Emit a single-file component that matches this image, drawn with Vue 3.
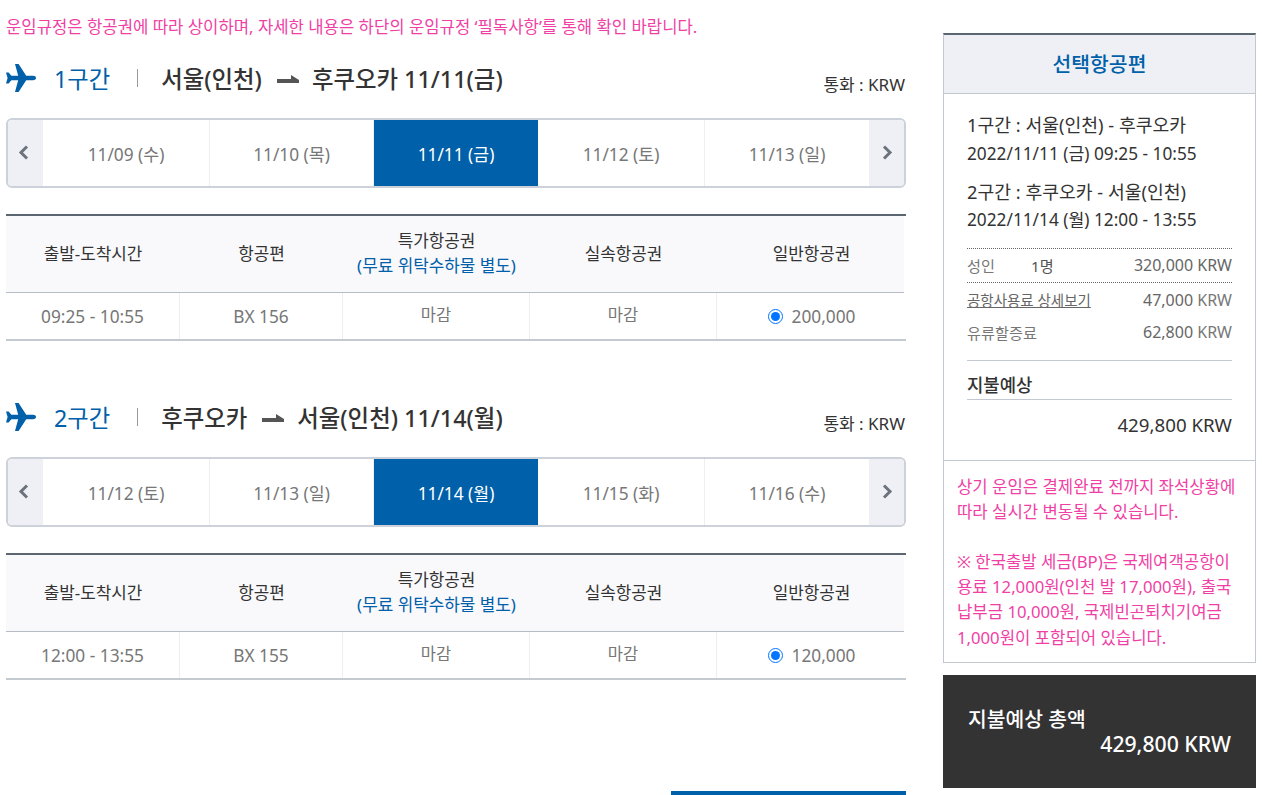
<script setup>
const sections = [
  {
    label: '1구간', from: '서울(인천)', to: '후쿠오카', date: '11/11(금)',
    tabs: ['11/09 (수)', '11/10 (목)', '11/11 (금)', '11/12 (토)', '11/13 (일)'],
    time: '09:25 - 10:55', flight: 'BX 156', price: '200,000',
  },
  {
    label: '2구간', from: '후쿠오카', to: '서울(인천)', date: '11/14(월)',
    tabs: ['11/12 (토)', '11/13 (일)', '11/14 (월)', '11/15 (화)', '11/16 (수)'],
    time: '12:00 - 13:55', flight: 'BX 155', price: '120,000',
  },
]
</script>

<template>
  <div class="page">
    <main class="main">
      <p class="notice">운임규정은 항공권에 따라 상이하며, 자세한 내용은 하단의 운임규정 ‘필독사항’를 통해 확인 바랍니다.</p>
      <section v-for="s in sections" :key="s.label" class="section">
        <div class="head">
          <svg class="plane" viewBox="0 0 30 28" aria-hidden="true">
            <path d="M9 0h3.6L20.2 11.8H27c1.8 0 3 .9 3 2.2s-1.2 2.2-3 2.2h-6.8L12.6 28H9l3.2-11.8H5.4L2.6 19.4H0L1.6 14 0 8.6h2.6l2.8 3.2h6.8z" />
          </svg>
          <h2 class="seg">{{ s.label }}</h2>
          <span class="bar"></span>
          <span class="route">{{ s.from }}</span>
          <svg class="arrow" viewBox="0 0 22 9" aria-hidden="true"><path d="M0 4h14V0l8 5v3H0z" /></svg>
          <span class="route">{{ s.to }} {{ s.date }}</span>
          <span class="currency">통화 : KRW</span>
        </div>

        <div class="tabs">
          <button class="nav prev" type="button"><svg viewBox="0 0 11 15"><path d="M9 1.5 3 7.5 9 13.5" /></svg></button>
          <div v-for="(t, i) in s.tabs" :key="t" class="tab" :class="{ active: i === 2 }">{{ t }}</div>
          <button class="nav next" type="button"><svg viewBox="0 0 11 15"><path d="M2 1.5 8 7.5 2 13.5" /></svg></button>
        </div>

        <div class="table">
          <div class="thead">
            <div>출발-도착시간</div>
            <div>항공편</div>
            <div>특가항공권<br /><span class="blue">(무료 위탁수하물 별도)</span></div>
            <div>실속항공권</div>
            <div>일반항공권</div>
          </div>
          <div class="tbody">
            <div>{{ s.time }}</div>
            <div>{{ s.flight }}</div>
            <div class="closed">마감</div>
            <div class="closed">마감</div>
            <div><label class="fare"><input type="radio" checked :name="s.label" />{{ s.price }}</label></div>
          </div>
        </div>
      </section>
      <div class="cta"></div>
    </main>

    <aside class="side">
      <div class="card">
        <h3 class="card-title">선택항공편</h3>
        <div class="summary">
          <p class="leg">1구간 : 서울(인천) - 후쿠오카</p>
          <p class="when first">2022/11/11 (금) 09:25 - 10:55</p>
          <p class="leg leg2">2구간 : 후쿠오카 - 서울(인천)</p>
          <p class="when">2022/11/14 (월) 12:00 - 13:55</p>

          <div class="row adult"><span class="l"><span class="who">성인</span><span class="cnt">1명</span></span><span class="strong">320,000 KRW</span></div>
          <div class="row fee"><a class="l link">공항사용료 상세보기</a><span><b>47,000</b> KRW</span></div>
          <div class="row fuel"><span class="l">유류할증료</span><span><b>62,800</b> KRW</span></div>

          <div class="expect">지불예상</div>
          <div class="expect-total">429,800 KRW</div>
        </div>
        <p class="warn">상기 운임은 결제완료 전까지 좌석상황에<br />따라 실시간 변동될 수 있습니다.<br /><br />※ 한국출발 세금(BP)은 국제여객공항이<br />용료 12,000원(인천 발 17,000원), 출국<br />납부금 10,000원, 국제빈곤퇴치기여금<br />1,000원이 포함되어 있습니다.</p>
      </div>
      <div class="grand">
        <div class="grand-label">지불예상 총액</div>
        <div class="grand-value">429,800 KRW</div>
      </div>
    </aside>
  </div>
</template>

<style scoped>
.page {
  display: flex;
  gap: 37px;
  width: 1262px;
  height: 795px;
  padding-left: 6px;
  box-sizing: border-box;
  overflow: hidden;
  font-family: "Noto Sans", "Noto Sans CJK KR", sans-serif;
  color: #333;
}
p, h2, h3 { margin: 0; font-weight: 400; }
.main { width: 900px; flex: none; }
.notice {
  padding-top: 16px;
  height: 22px;
  line-height: 22px;
  font-size: 16.68px;
  white-space: nowrap;
  color: #f03fa5;
}
.section { height: 339px; box-sizing: border-box; padding-top: 18px; }
.head {
  display: flex;
  align-items: center;
  height: 44px;
  margin-bottom: 18px;
}
.plane { width: 30px; height: 28px; fill: #0060a9; flex: none; }
.seg { margin-left: 18px; font-size: 23.3px; color: #0060a9; }
.bar { width: 1px; height: 18px; background: #999; margin: 0 23px 0 27px; }
.route { font-size: 23.4px; font-weight: 500; color: #333; }
.arrow { width: 22px; height: 9px; margin: 2px 13px 0 15px; fill: #555; }
.currency { margin-left: auto; margin-top: 10px; margin-right: 1px; font-size: 17px; color: #333; }
.tabs {
  display: grid;
  grid-template-columns: 35px 167px 164px 164px 167px 164px 35px;
  height: 66px;
  border: 2px solid #cdd2da;
  border-radius: 6px;
  overflow: hidden;
}
.nav {
  padding: 0;
  border: 0;
  background: #eef0f5;
  display: flex;
  align-items: center;
  justify-content: center;
}
.nav svg { width: 11px; height: 15px; margin-top: -2px; fill: none; stroke: #6b737c; stroke-width: 3; }
.prev svg { margin-right: 5px; }
.next svg { margin-left: 1px; }
.tab {
  display: flex;
  align-items: center;
  justify-content: center;
  font-size: 17.3px;
  color: #777;
  border-right: 1px solid #eceef2;
}
.tab:nth-child(6) { border-right: 0; }
.tab.active { background: #0060a9; color: #fff; border-right: 0; }
.table { margin-top: 26px; border-top: 2px solid #5b6670; }
.thead, .tbody {
  display: grid;
  grid-template-columns: 174px 163px 187px 187px 189px;
  text-align: center;
}
.thead {
  height: 74px;
  padding-bottom: 2px;
  margin-right: 2px;
  background: #f9f9fc;
  border-bottom: 1px solid #b5bcc6;
  align-items: center;
  font-size: 16.9px;
  line-height: 25px;
  color: #333;
}
.blue { color: #0060a9; }
.tbody {
  height: 46px;
  border-bottom: 2px solid #c5cad1;
  font-size: 17.3px;
  color: #777;
}
.tbody > div {
  display: flex;
  align-items: center;
  justify-content: center;
  border-right: 1px solid #eceef0;
}
.tbody > div:last-child { border-right: 0; }
.closed { padding-bottom: 4px; box-sizing: border-box; font-size: 16.5px; }
.fare { display: flex; align-items: center; }
.fare input { width: 15px; height: 15px; margin: 0 9px 0 0; accent-color: #0075ff; }
.cta {
  width: 235px;
  height: 4px;
  margin: 75px 0 0 665px;
  background: #0060a9;
}
.side { width: 313px; flex: none; padding-top: 33px; }
.card {
  border: 1px solid #c1c8d0;
  border-top: 2px solid #5b6670;
  height: 630px;
  box-sizing: border-box;
}
.card-title {
  height: 58px;
  line-height: 58px;
  text-align: center;
  font-size: 20.4px;
  font-weight: 500;
  color: #0060a9;
  background: #eef0f5;
  border-bottom: 1px solid #c1c8d0;
}
.summary {
  height: 367px;
  box-sizing: border-box;
  padding: 16px 23px 0;
  border-bottom: 1px solid #c1c8d0;
}
.leg { font-size: 18.25px; line-height: 30px; color: #333; }
.leg2 { margin-top: 10px; }
.when { font-size: 17.25px; line-height: 26px; color: #333; }
.when.first { margin-top: 1px; }
.row {
  display: flex;
  justify-content: space-between;
  align-items: center;
  font-size: 15.2px;
  color: #777;
}
.row b { font-weight: 400; color: #666; }
.row > span:last-child { font-size: 16px; }
.adult {
  height: 31px;
  padding-bottom: 2px;
  margin-top: 15px;
  border-top: 1px dotted #666;
  border-bottom: 1px dotted #666;
}
.who { display: inline-block; width: 64px; }
.cnt { color: #555; }
.strong { color: #666; }
.fee { height: 33px; }
.fuel { height: 31px; }
.link { color: #666; text-decoration: underline; font-size: 14.5px; }
.expect {
  margin-top: 13px;
  padding-top: 11px;
  height: 27px;
  line-height: 27px;
  border-top: 1px solid #c1c8d0;
  border-bottom: 1px solid #c1c8d0;
  font-size: 17.8px;
  font-weight: 500;
  color: #333;
}
.expect-total { margin-top: 12px; text-align: right; font-size: 18.7px; line-height: 26px; color: #333; }
.warn {
  padding: 13px 13px 0;
  font-size: 16.7px;
  line-height: 25.1px;
  color: #f03fa5;
  white-space: nowrap;
}
.grand {
  height: 113px;
  margin-top: 12px;
  box-sizing: border-box;
  padding: 31px 25px 0;
  background: #333;
  color: #fff;
  font-weight: 500;
  font-size: 20.4px;
}
.grand-label { line-height: 26px; }
.grand-value { line-height: 24px; font-size: 21.2px; text-align: right; }
</style>

<style>
html, body { margin: 0; background: #fff; }
</style>
